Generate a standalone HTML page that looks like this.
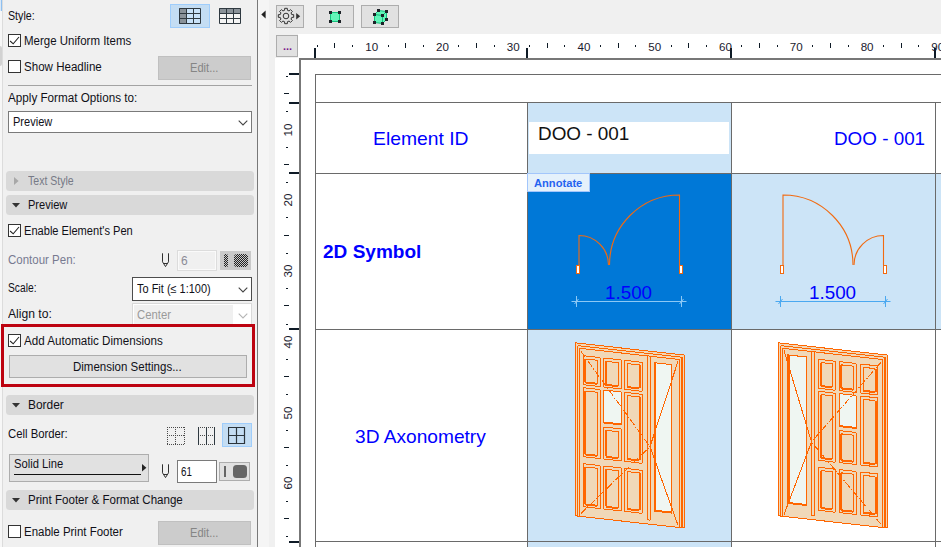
<!DOCTYPE html>
<html><head><meta charset="utf-8"><title>Schedule Format Options</title>
<style>
html,body{margin:0;padding:0}
body{width:941px;height:547px;overflow:hidden;position:relative;background:#f0f0f0;font-family:"Liberation Sans",sans-serif;font-size:12px}
div,span.t,span.rl{position:absolute}
#panel{left:0;top:0;width:257px;height:547px;background:#f0f0f0;overflow:hidden}
.t{white-space:nowrap;transform-origin:0 50%}
.cb{background:#fff;border:1px solid #333;box-sizing:border-box}
.btn{background:#e1e1e1;border:1px solid #adadad;box-sizing:border-box}
.btn.dis{background:#cccccc;border-color:#c0c0c0}
.bl{position:absolute;left:0;right:0;top:50%;margin-top:-8px;line-height:16px;text-align:center;color:#101018;white-space:nowrap}
.dd{background:#fff;border:1px solid #7a7a7a;box-sizing:border-box}
.hdr{background:#d9d9d9;border-radius:3.5px}
.rl{font-size:11.6px;line-height:16px;height:16px;text-align:center;color:#1a1a2e;white-space:nowrap}
.rv{transform:rotate(-90deg);transform-origin:50% 50%}
</style></head><body>
<div id="panel">
<div class="" style="left:0px;top:0px;width:3px;height:547px;background:#f7f7f7;border-right:1px solid #dcdcdc;box-sizing:border-box"></div>
<div class="" style="left:0px;top:0px;width:2px;height:11px;background:#d9e8f8;border-right:1px solid #8fc0f0;box-sizing:border-box"></div>
<div class="" style="left:0px;top:46px;width:2px;height:20px;background:#d2d2d2;border-radius:0 2px 2px 0"></div>
<span id="t_style" class="t" style="left:7.9px;top:8px;font-size:12px;line-height:16px;color:#101018;font-weight:normal;transform:scaleX(0.8899);">Style:</span>
<div class="" style="left:170px;top:4px;width:40px;height:24px;background:#c4ddf3;border:1px solid #9fcdfb;box-sizing:border-box"></div>
<svg style="position:absolute;left:179px;top:8px" width="22" height="16" viewBox="0 0 22 16"><rect x="0" y="0" width="22" height="16" fill="#c9e2f8"/><rect x="0" y="0" width="8" height="16" fill="#8a9299"/><path d="M0.5 0.5H21.5V15.5H0.5Z M7.5 0.5V15.5 M14.5 0.5V15.5 M0.5 5.5H21.5 M0.5 10.5H21.5" fill="none" stroke="#2f3940" stroke-width="1"/></svg>
<svg style="position:absolute;left:219px;top:8px" width="22" height="16" viewBox="0 0 22 16"><rect x="0" y="0" width="22" height="16" fill="#f4f4f4"/><rect x="0" y="0" width="22" height="6" fill="#8a9299"/><path d="M0.5 0.5H21.5V15.5H0.5Z M7.5 0.5V15.5 M14.5 0.5V15.5 M0.5 5.5H21.5 M0.5 10.5H21.5" fill="none" stroke="#2f3940" stroke-width="1"/></svg>
<div class="cb" style="left:8px;top:34px;width:13px;height:13px;"><svg width="13" height="13" viewBox="0 0 13 13" style="position:absolute;left:-1px;top:-1px"><path d="M2.1 7 L5.2 9.8 L11 3" fill="none" stroke="#222" stroke-width="1.1"/></svg></div>
<span id="t_merge" class="t" style="left:23.9px;top:33px;font-size:12px;line-height:16px;color:#101018;font-weight:normal;transform:scaleX(0.9575);">Merge Uniform Items</span>
<div class="cb" style="left:8px;top:60px;width:13px;height:13px;"></div>
<span id="t_showh" class="t" style="left:23.9px;top:59px;font-size:12px;line-height:16px;color:#101018;font-weight:normal;transform:scaleX(0.9635);">Show Headline</span>
<div class="btn dis" style="left:158px;top:56px;width:93px;height:24px;"></div>
<span id="t_edit1" class="t" style="left:190.4px;top:60px;font-size:12px;line-height:16px;color:#858585;font-weight:normal;transform:scaleX(0.9268);">Edit...</span>
<div class="" style="left:8px;top:85px;width:244px;height:1px;background:#a3a3a3"></div>
<span id="t_apply" class="t" style="left:7.9px;top:90px;font-size:12px;line-height:16px;color:#101018;font-weight:normal;transform:scaleX(0.9740);">Apply Format Options to:</span>
<div class="dd" style="left:8px;top:111px;width:244px;height:22px;"></div>
<span id="t_prev1" class="t" style="left:12.9px;top:114px;font-size:12px;line-height:16px;color:#101018;font-weight:normal;transform:scaleX(0.9191);">Preview</span>
<svg style="position:absolute;left:238px;top:120px" width="10" height="6" viewBox="0 0 10 6"><path d="M0.7 0.7 L5 5 L9.3 0.7" fill="none" stroke="#444" stroke-width="1.1"/></svg>
<div class="hdr" style="left:6px;top:171px;width:248px;height:20px;"></div><svg style="position:absolute;left:14px;top:177px" width="5" height="8" viewBox="0 0 5 8"><path d="M0 0V8L4.6 4Z" fill="#a8a8a8"/></svg><span id="t_h1" class="t" style="left:27.9px;top:173px;font-size:12px;line-height:16px;color:#777a86;font-weight:normal;transform:scaleX(0.8784);">Text Style</span>
<div class="hdr" style="left:6px;top:195px;width:248px;height:20px;"></div><svg style="position:absolute;left:12px;top:203px" width="8" height="5" viewBox="0 0 8 5"><path d="M0 0H8L4 4.6Z" fill="#333"/></svg><span id="t_h2" class="t" style="left:27.9px;top:197px;font-size:12px;line-height:16px;color:#101018;font-weight:normal;transform:scaleX(0.9191);">Preview</span>
<div class="cb" style="left:8px;top:224px;width:13px;height:13px;"><svg width="13" height="13" viewBox="0 0 13 13" style="position:absolute;left:-1px;top:-1px"><path d="M2.1 7 L5.2 9.8 L11 3" fill="none" stroke="#222" stroke-width="1.1"/></svg></div>
<span id="t_enpen" class="t" style="left:23.9px;top:223px;font-size:12px;line-height:16px;color:#101018;font-weight:normal;transform:scaleX(0.9238);">Enable Element&#39;s Pen</span>
<span id="t_cpen" class="t" style="left:7.9px;top:252px;font-size:12px;line-height:16px;color:#777a90;font-weight:normal;transform:scaleX(0.9583);">Contour Pen:</span>
<svg style="position:absolute;left:161px;top:253px" width="9" height="15" viewBox="0 0 9 15"><path d="M1.5 0.3V8.8L4.5 13.6L7.5 8.8V0.3 M2.6 10.5H6.4" fill="none" stroke="#303030" stroke-width="1"/></svg>
<div class="" style="left:177px;top:250px;width:40px;height:21px;border:1px solid #dcdcdc;box-sizing:border-box;background:#f0f0f0;box-shadow:inset 0 0 0 1px #fafafa"></div>
<span id="t_six" class="t" style="left:180.9px;top:253px;font-size:12px;line-height:16px;color:#8a8a96;font-weight:normal;transform:scaleX(1.0000);">6</span>
<div class="" style="left:220px;top:251px;width:31px;height:19px;background:#c9c9c9"></div>
<svg style="position:absolute;left:220px;top:251px" width="31" height="19" viewBox="0 0 31 19"><defs><pattern id="dz" width="2" height="2" patternUnits="userSpaceOnUse"><rect x="0" y="0" width="1" height="1" fill="#222"/><rect x="1" y="1" width="1" height="1" fill="#222"/></pattern></defs><rect x="4" y="3" width="4" height="13" rx="1.5" fill="url(#dz)"/><rect x="14" y="3" width="14" height="13" rx="3" fill="url(#dz)"/></svg>
<span id="t_scale" class="t" style="left:7.9px;top:280px;font-size:12px;line-height:16px;color:#101018;font-weight:normal;transform:scaleX(0.8538);">Scale:</span>
<div class="dd" style="left:132px;top:277px;width:120px;height:24px;border-color:#4d4d4d"></div>
<span id="t_tofit" class="t" style="left:136.9px;top:281px;font-size:12px;line-height:16px;color:#101018;font-weight:normal;transform:scaleX(0.9145);">To Fit (&le; 1:100)</span>
<svg style="position:absolute;left:238px;top:287px" width="10" height="6" viewBox="0 0 10 6"><path d="M0.7 0.7 L5 5 L9.3 0.7" fill="none" stroke="#444" stroke-width="1.1"/></svg>
<span id="t_align" class="t" style="left:7.9px;top:306px;font-size:12px;line-height:16px;color:#101018;font-weight:normal;transform:scaleX(1.0104);">Align to:</span>
<div class="" style="left:132px;top:303px;width:120px;height:23px;border:1px solid #d9d9d9;box-sizing:border-box;background:#fff"></div>
<div class="" style="left:134px;top:305px;width:99px;height:21px;background:#f0f0f0"></div>
<span id="t_center" class="t" style="left:136.9px;top:307px;font-size:12px;line-height:16px;color:#9a9a9a;font-weight:normal;transform:scaleX(0.9423);">Center</span>
<svg style="position:absolute;left:238px;top:313px" width="10" height="6" viewBox="0 0 10 6"><path d="M0.7 0.7 L5 5 L9.3 0.7" fill="none" stroke="#b5b5b5" stroke-width="1.1"/></svg>
<div class="" style="left:1px;top:324px;width:254px;height:63px;border:3px solid #bd0310;box-sizing:border-box;background:#f0f0f0"></div>
<div class="cb" style="left:8px;top:334px;width:13px;height:13px;"><svg width="13" height="13" viewBox="0 0 13 13" style="position:absolute;left:-1px;top:-1px"><path d="M2.1 7 L5.2 9.8 L11 3" fill="none" stroke="#222" stroke-width="1.1"/></svg></div>
<span id="t_addauto" class="t" style="left:23.9px;top:333px;font-size:12px;line-height:16px;color:#101018;font-weight:normal;transform:scaleX(0.9677);">Add Automatic Dimensions</span>
<div class="btn" style="left:9px;top:355px;width:238px;height:23px;"></div>
<span id="t_dimset" class="t" style="left:73.0px;top:359px;font-size:12px;line-height:16px;color:#101018;font-weight:normal;transform:scaleX(0.9592);">Dimension Settings...</span>
<div class="hdr" style="left:6px;top:395px;width:248px;height:20px;"></div><svg style="position:absolute;left:12px;top:403px" width="8" height="5" viewBox="0 0 8 5"><path d="M0 0H8L4 4.6Z" fill="#333"/></svg><span id="t_h3" class="t" style="left:27.9px;top:397px;font-size:12px;line-height:16px;color:#101018;font-weight:normal;transform:scaleX(0.9934);">Border</span>
<span id="t_cellb" class="t" style="left:7.9px;top:426px;font-size:12px;line-height:16px;color:#101018;font-weight:normal;transform:scaleX(0.9431);">Cell Border:</span>
<div class="" style="left:222px;top:423px;width:30px;height:24px;background:#c4ddf3;border:1px solid #9fcdfb;box-sizing:border-box"></div>
<svg style="position:absolute;left:167px;top:427px" width="18" height="18" viewBox="0 0 18 18" shape-rendering="crispEdges"><path d="M0 0.5H18 M0 8.5H18 M0 17.5H18 M0.5 0V18 M8.5 0V18 M17.5 0V18" fill="none" stroke="#4a4a4a" stroke-width="1" stroke-dasharray="1 1"/></svg>
<svg style="position:absolute;left:198px;top:427px" width="18" height="18" viewBox="0 0 18 18" shape-rendering="crispEdges"><path d="M0 0.5H17 M0 17.5H17 M0 8.5H17" fill="none" stroke="#4a4a4a" stroke-width="1" stroke-dasharray="1 1"/><path d="M0.5 0V18 M8.5 0V18 M16.5 0V18" fill="none" stroke="#2f3940" stroke-width="1"/></svg>
<svg style="position:absolute;left:228px;top:427px" width="18" height="18" viewBox="0 0 18 18"><path d="M0.5 0.5H16.5V16.5H0.5Z M8.5 0.5V16.5 M0.5 8.5H16.5" fill="none" stroke="#2b343b" stroke-width="1.2"/></svg>
<div class="btn" style="left:9px;top:454px;width:140px;height:28px;"></div>
<span id="t_solid" class="t" style="left:13.9px;top:456px;font-size:12px;line-height:16px;color:#101018;font-weight:normal;transform:scaleX(0.9342);">Solid Line</span>
<div class="" style="left:14px;top:474px;width:127px;height:1px;background:#111"></div>
<svg style="position:absolute;left:142px;top:464px" width="5" height="8" viewBox="0 0 5 8"><path d="M0 0V7.4L4.4 3.7Z" fill="#222"/></svg>
<svg style="position:absolute;left:161px;top:464px" width="9" height="15" viewBox="0 0 9 15"><path d="M1.5 0.3V8.8L4.5 13.6L7.5 8.8V0.3 M2.6 10.5H6.4" fill="none" stroke="#303030" stroke-width="1"/></svg>
<div class="dd" style="left:177px;top:460px;width:40px;height:23px;"></div>
<span id="t_61" class="t" style="left:181.4px;top:464px;font-size:12px;line-height:16px;color:#101018;font-weight:normal;transform:scaleX(0.8121);">61</span>
<div class="btn" style="left:219px;top:462px;width:31px;height:19px;"></div>
<div class="" style="left:224px;top:466px;width:2px;height:11px;background:#666"></div>
<div class="" style="left:233px;top:465px;width:14px;height:13px;background:#666;border-radius:3.5px"></div>
<div class="hdr" style="left:6px;top:490px;width:248px;height:20px;"></div><svg style="position:absolute;left:12px;top:498px" width="8" height="5" viewBox="0 0 8 5"><path d="M0 0H8L4 4.6Z" fill="#333"/></svg><span id="t_h4" class="t" style="left:27.9px;top:492px;font-size:12px;line-height:16px;color:#101018;font-weight:normal;transform:scaleX(0.9629);">Print Footer &amp; Format Change</span>
<div class="cb" style="left:8px;top:525px;width:13px;height:13px;"></div>
<span id="t_enfoot" class="t" style="left:23.9px;top:524px;font-size:12px;line-height:16px;color:#101018;font-weight:normal;transform:scaleX(0.9553);">Enable Print Footer</span>
<div class="btn dis" style="left:158px;top:521px;width:93px;height:24px;"></div>
<span id="t_edit2" class="t" style="left:190.4px;top:525px;font-size:12px;line-height:16px;color:#858585;font-weight:normal;transform:scaleX(0.9268);">Edit...</span>
</div>
<div class="" style="left:257px;top:0px;width:1px;height:547px;background:#787878"></div>
<div class="" style="left:258px;top:0px;width:11px;height:547px;background:#f5f5f5"></div>
<svg style="position:absolute;left:261px;top:10px" width="5" height="9" viewBox="0 0 5 9"><path d="M4.6 0.4V8.4L0.3 4.4Z" fill="#222"/></svg>
<div class="btn" style="left:276px;top:5px;width:28px;height:23px;"></div>
<svg style="position:absolute;left:276px;top:5px" width="28" height="23" viewBox="0 0 28 23"><path d="M17.68 9.66 L17.68 12.34 L15.74 12.38 L15.03 14.08 L16.38 15.49 L14.49 17.38 L13.08 16.03 L11.38 16.74 L11.34 18.68 L8.66 18.68 L8.62 16.74 L6.92 16.03 L5.51 17.38 L3.62 15.49 L4.97 14.08 L4.26 12.38 L2.32 12.34 L2.32 9.66 L4.26 9.62 L4.97 7.92 L3.62 6.51 L5.51 4.62 L6.92 5.97 L8.62 5.26 L8.66 3.32 L11.34 3.32 L11.38 5.26 L13.08 5.97 L14.49 4.62 L16.38 6.51 L15.03 7.92 L15.74 9.62Z" fill="none" stroke="#333" stroke-width="1" stroke-linejoin="round"/><circle cx="10" cy="11" r="2.8" fill="none" stroke="#333" stroke-width="1"/><path d="M20.2 8V14.6L24.2 11.3Z" fill="#333"/></svg>
<div class="btn" style="left:316px;top:5px;width:38px;height:23px;"></div>
<svg style="position:absolute;left:316px;top:5px" width="38" height="23" viewBox="0 0 38 23"><rect x="14.5" y="7.5" width="9" height="9" fill="#62f4b8" stroke="#12c07c" stroke-width="1"/><g fill="#1d2228" shape-rendering="crispEdges"><rect x="13" y="6" width="3" height="3"/><rect x="22" y="6" width="3" height="3"/><rect x="13" y="15" width="3" height="3"/><rect x="22" y="15" width="3" height="3"/></g></svg>
<div class="btn" style="left:361px;top:5px;width:38px;height:23px;"></div>
<svg style="position:absolute;left:361px;top:5px" width="38" height="23" viewBox="0 0 38 23"><path d="M13.5 9.5L17.5 5.5L25.5 6.5V14.5L21.5 18.5L13.5 17.5Z" fill="#62f4b8" stroke="#12c07c" stroke-width="1" stroke-linejoin="round"/><path d="M13.5 9.5L21.5 10.5V18.5 M21.5 10.5L25.5 6.5" fill="none" stroke="#12c07c" stroke-width="1"/><g fill="#1d2228" shape-rendering="crispEdges"><rect x="12" y="8" width="3" height="3"/><rect x="20" y="9" width="3" height="3"/><rect x="12" y="16" width="3" height="3"/><rect x="20" y="17" width="3" height="3"/><rect x="16" y="4" width="3" height="3"/><rect x="24" y="5" width="3" height="3"/><rect x="24" y="13" width="3" height="3"/></g></svg>
<div class="" style="left:298px;top:34px;width:643px;height:25px;background:#fff"></div>
<div class="" style="left:275px;top:58px;width:25px;height:489px;background:#fff"></div>
<div class="btn" style="left:276px;top:35px;width:22px;height:22px;"></div>
<span id="t_dots" class="t" style="left:283px;top:39px;font-size:11px;line-height:15px;color:#7a1a8a;font-weight:bold;transform:scaleX(1.0000);">...</span>
<svg style="position:absolute;left:0;top:0" width="941" height="547" viewBox="0 0 941 547" shape-rendering="crispEdges"><rect x="317" y="45" width="1" height="2" fill="#0e1a26"/><rect x="334" y="43" width="1" height="5" fill="#0e1a26"/><rect x="352" y="45" width="1" height="2" fill="#0e1a26"/><rect x="388" y="45" width="1" height="2" fill="#0e1a26"/><rect x="405" y="43" width="1" height="5" fill="#0e1a26"/><rect x="423" y="45" width="1" height="2" fill="#0e1a26"/><rect x="458" y="45" width="1" height="2" fill="#0e1a26"/><rect x="476" y="43" width="1" height="5" fill="#0e1a26"/><rect x="494" y="45" width="1" height="2" fill="#0e1a26"/><rect x="529" y="45" width="1" height="2" fill="#0e1a26"/><rect x="547" y="43" width="1" height="5" fill="#0e1a26"/><rect x="564" y="45" width="1" height="2" fill="#0e1a26"/><rect x="600" y="45" width="1" height="2" fill="#0e1a26"/><rect x="618" y="43" width="1" height="5" fill="#0e1a26"/><rect x="635" y="45" width="1" height="2" fill="#0e1a26"/><rect x="671" y="45" width="1" height="2" fill="#0e1a26"/><rect x="688" y="43" width="1" height="5" fill="#0e1a26"/><rect x="706" y="45" width="1" height="2" fill="#0e1a26"/><rect x="741" y="45" width="1" height="2" fill="#0e1a26"/><rect x="759" y="43" width="1" height="5" fill="#0e1a26"/><rect x="777" y="45" width="1" height="2" fill="#0e1a26"/><rect x="812" y="45" width="1" height="2" fill="#0e1a26"/><rect x="830" y="43" width="1" height="5" fill="#0e1a26"/><rect x="848" y="45" width="1" height="2" fill="#0e1a26"/><rect x="883" y="45" width="1" height="2" fill="#0e1a26"/><rect x="901" y="43" width="1" height="5" fill="#0e1a26"/><rect x="918" y="45" width="1" height="2" fill="#0e1a26"/><rect x="314" y="48" width="2" height="10" fill="#0e1a26"/><rect x="526" y="48" width="2" height="10" fill="#0e1a26"/><rect x="730" y="48" width="2" height="10" fill="#0e1a26"/><rect x="934" y="48" width="2" height="10" fill="#0e1a26"/><rect x="286" y="76" width="2" height="1" fill="#0e1a26"/><rect x="284" y="93" width="5" height="1" fill="#0e1a26"/><rect x="286" y="111" width="2" height="1" fill="#0e1a26"/><rect x="286" y="147" width="2" height="1" fill="#0e1a26"/><rect x="284" y="164" width="5" height="1" fill="#0e1a26"/><rect x="286" y="182" width="2" height="1" fill="#0e1a26"/><rect x="286" y="217" width="2" height="1" fill="#0e1a26"/><rect x="284" y="235" width="5" height="1" fill="#0e1a26"/><rect x="286" y="253" width="2" height="1" fill="#0e1a26"/><rect x="286" y="288" width="2" height="1" fill="#0e1a26"/><rect x="284" y="305" width="5" height="1" fill="#0e1a26"/><rect x="286" y="324" width="2" height="1" fill="#0e1a26"/><rect x="286" y="359" width="2" height="1" fill="#0e1a26"/><rect x="284" y="376" width="5" height="1" fill="#0e1a26"/><rect x="286" y="394" width="2" height="1" fill="#0e1a26"/><rect x="286" y="430" width="2" height="1" fill="#0e1a26"/><rect x="284" y="447" width="5" height="1" fill="#0e1a26"/><rect x="286" y="465" width="2" height="1" fill="#0e1a26"/><rect x="286" y="501" width="2" height="1" fill="#0e1a26"/><rect x="284" y="518" width="5" height="1" fill="#0e1a26"/><rect x="286" y="536" width="2" height="1" fill="#0e1a26"/><rect x="289" y="73" width="10" height="2" fill="#0e1a26"/><rect x="289" y="102" width="10" height="2" fill="#0e1a26"/><rect x="289" y="172" width="10" height="2" fill="#0e1a26"/><rect x="289" y="328" width="10" height="2" fill="#0e1a26"/><rect x="289" y="541" width="10" height="2" fill="#0e1a26"/></svg>
<span class="rl" style="left:361.7px;top:39px;width:20px">10</span>
<span class="rl" style="left:432.4px;top:39px;width:20px">20</span>
<span class="rl" style="left:503.2px;top:39px;width:20px">30</span>
<span class="rl" style="left:574.0px;top:39px;width:20px">40</span>
<span class="rl" style="left:644.8px;top:39px;width:20px">50</span>
<span class="rl" style="left:715.5px;top:39px;width:20px">60</span>
<span class="rl" style="left:786.3px;top:39px;width:20px">70</span>
<span class="rl" style="left:857.1px;top:39px;width:20px">80</span>
<span class="rl" style="left:927.8px;top:39px;width:20px">90</span>
<span class="rl rv" style="left:278px;top:121.5px;width:20px">10</span>
<span class="rl rv" style="left:278px;top:192.2px;width:20px">20</span>
<span class="rl rv" style="left:278px;top:263.0px;width:20px">30</span>
<span class="rl rv" style="left:278px;top:333.8px;width:20px">40</span>
<span class="rl rv" style="left:278px;top:404.6px;width:20px">50</span>
<span class="rl rv" style="left:278px;top:475.3px;width:20px">60</span>
<div class="" style="left:299px;top:58px;width:642px;height:489px;background:#fff;border-left:2px solid #777;border-top:2px solid #777;box-sizing:border-box"></div>
<div class="" style="left:528px;top:103px;width:203px;height:444px;background:#cce4f7"></div>
<div class="" style="left:732px;top:174px;width:209px;height:155px;background:#cce4f7"></div>
<div class="" style="left:528px;top:174px;width:203px;height:155px;background:#0078d7"></div>
<div class="" style="left:529px;top:122px;width:200px;height:32px;background:#fff"></div>
<div class="" style="left:315px;top:74px;width:626px;height:1px;background:#6a6a6a"></div>
<div class="" style="left:315px;top:102px;width:626px;height:1px;background:#6a6a6a"></div>
<div class="" style="left:315px;top:173px;width:626px;height:1px;background:#6a6a6a"></div>
<div class="" style="left:315px;top:329px;width:626px;height:1px;background:#6a6a6a"></div>
<div class="" style="left:315px;top:541px;width:626px;height:1px;background:#6a6a6a"></div>
<div class="" style="left:315px;top:74px;width:1px;height:473px;background:#6a6a6a"></div>
<div class="" style="left:527px;top:74px;width:1px;height:473px;background:#6a6a6a"></div>
<div class="" style="left:731px;top:74px;width:1px;height:473px;background:#6a6a6a"></div>
<div class="" style="left:935px;top:74px;width:1px;height:473px;background:#6a6a6a"></div>
<div class="" style="left:316px;top:75px;width:625px;height:27px;background:#fff"></div>
<span id="c_elid" class="t" style="left:373.2px;top:126px;font-size:19px;line-height:25px;color:#0000ff;font-weight:normal;transform:scaleX(1.0163);">Element ID</span>
<span id="c_doo1" class="t" style="left:538px;top:121px;font-size:19px;line-height:25px;color:#111;font-weight:normal;transform:scaleX(0.9948);">DOO - 001</span>
<span id="c_doo2" class="t" style="left:834.2px;top:126px;font-size:19px;line-height:25px;color:#0000ff;font-weight:normal;transform:scaleX(0.9915);">DOO - 001</span>
<span id="c_2d" class="t" style="left:323px;top:239px;font-size:19px;line-height:25px;color:#0000ff;font-weight:bold;transform:scaleX(1.0020);">2D Symbol</span>
<span id="c_3d" class="t" style="left:355.2px;top:424px;font-size:19px;line-height:25px;color:#0000ff;font-weight:normal;transform:scaleX(1.0069);">3D Axonometry</span>
<div class="" style="left:527px;top:173px;width:63px;height:19px;background:#e5f1fb;border:1px solid #a3c6fb;box-sizing:border-box"></div><span id="t_annot" class="t" style="left:534.2px;top:176px;font-size:11px;line-height:15px;color:#2563f0;font-weight:bold;transform:scaleX(1.0134);">Annotate</span>
<svg style="position:absolute;left:0;top:0" width="941" height="547" viewBox="0 0 941 547">
<path d="M579.0 265V235.5 A29.5 29.5 0 0 1 608.5 265" fill="none" stroke="#f26a10" stroke-width="1.1"/><path d="M679.5 265V195 A70 70 0 0 0 609.5 265" fill="none" stroke="#f26a10" stroke-width="1.1"/><rect x="576.5" y="265.5" width="3" height="8" fill="#fff" stroke="#f26a10" stroke-width="1"/><rect x="679.5" y="265.5" width="3" height="8" fill="#fff" stroke="#f26a10" stroke-width="1"/><path d="M571.5 301.5H686.5 M576.5 296V307 M681.5 296V307 M574.5 304L578.5 299 M679.5 304L683.5 299" fill="none" stroke="#8cc8f5" stroke-width="1"/>
<path d="M783.0 265V195 A70 70 0 0 1 853.0 265" fill="none" stroke="#f26a10" stroke-width="1.1"/><path d="M883.5 265V235.5 A29.5 29.5 0 0 0 854.0 265" fill="none" stroke="#f26a10" stroke-width="1.1"/><rect x="780.5" y="265.5" width="3" height="8" fill="#fff" stroke="#f26a10" stroke-width="1"/><rect x="883.5" y="265.5" width="3" height="8" fill="#fff" stroke="#f26a10" stroke-width="1"/><path d="M775.5 301.5H890.5 M780.5 296V307 M885.5 296V307 M778.5 304L782.5 299 M883.5 304L887.5 299" fill="none" stroke="#4aa8f0" stroke-width="1"/>
<g shape-rendering="crispEdges">
<path d="M575.0 342.8L684.0 355.0L684.0 528.0L575.0 515.8Z" fill="#f0d8b8" stroke="#ff6600" stroke-width="1" stroke-linejoin="round"/><path d="M577.5 345.6L577.5 515.6" stroke="#ff6600" stroke-width="1" fill="none"/><path d="M579.5 348.3L579.5 515.8" stroke="#ff6600" stroke-width="1" fill="none"/><path d="M577.5 345.6L681.5 357.2" stroke="#ff6600" stroke-width="1" fill="none"/><path d="M579.5 348.3L679.5 359.5" stroke="#ff6600" stroke-width="1" fill="none"/><path d="M681.5 357.2L681.5 527.2" stroke="#ff6600" stroke-width="2" fill="none"/><path d="M679.0 359.4L679.0 526.9" stroke="#ff6600" stroke-width="1" fill="none"/><path d="M647.0 355.8L650.0 356.2L650.0 520.2L647.0 519.8Z" fill="#f0d8b8" stroke="#ff6600" stroke-width="1.0" stroke-linejoin="round"/><path d="M654.5 362.7L671.5 364.6L671.5 513.1L654.5 511.2Z" fill="#eff6f2" stroke="#ff6600" stroke-width="1" stroke-linejoin="round"/><path d="M655.0 362.7L655.0 511.2" stroke="#ff6600" stroke-width="2" fill="none"/><path d="M654.5 510.7L671.5 512.6" stroke="#ff6600" stroke-width="2" fill="none"/><path d="M583.0 355.7L600.0 357.6L600.0 386.6L583.0 384.7Z" fill="none" stroke="#ff6600" stroke-width="1" stroke-linejoin="round"/><path d="M585.5 359.0L597.5 360.3L597.5 383.3L585.5 382.0Z" fill="#f0d8b8" stroke="#ff6600" stroke-width="1" stroke-linejoin="round"/><path d="M585.0 358.9L585.0 381.9" stroke="#ff6600" stroke-width="2" fill="none"/><path d="M585.5 382.5L597.5 383.8" stroke="#ff6600" stroke-width="2" fill="none"/><path d="M583.0 463.7L600.0 465.6L600.0 508.6L583.0 506.7Z" fill="none" stroke="#ff6600" stroke-width="1" stroke-linejoin="round"/><path d="M585.5 467.0L597.5 468.3L597.5 505.3L585.5 504.0Z" fill="#f0d8b8" stroke="#ff6600" stroke-width="1" stroke-linejoin="round"/><path d="M585.0 466.9L585.0 503.9" stroke="#ff6600" stroke-width="2" fill="none"/><path d="M585.5 504.5L597.5 505.8" stroke="#ff6600" stroke-width="2" fill="none"/><path d="M603.5 358.0L621.0 359.9L621.0 388.9L603.5 387.0Z" fill="none" stroke="#ff6600" stroke-width="1" stroke-linejoin="round"/><path d="M606.0 361.3L618.5 362.7L618.5 385.7L606.0 384.3Z" fill="#f0d8b8" stroke="#ff6600" stroke-width="1" stroke-linejoin="round"/><path d="M605.5 361.2L605.5 384.2" stroke="#ff6600" stroke-width="2" fill="none"/><path d="M606.0 384.8L618.5 386.2" stroke="#ff6600" stroke-width="2" fill="none"/><path d="M603.5 466.0L621.0 467.9L621.0 510.9L603.5 509.0Z" fill="none" stroke="#ff6600" stroke-width="1" stroke-linejoin="round"/><path d="M606.0 469.3L618.5 470.7L618.5 507.7L606.0 506.3Z" fill="#f0d8b8" stroke="#ff6600" stroke-width="1" stroke-linejoin="round"/><path d="M605.5 469.2L605.5 506.2" stroke="#ff6600" stroke-width="2" fill="none"/><path d="M606.0 506.8L618.5 508.2" stroke="#ff6600" stroke-width="2" fill="none"/><path d="M624.5 360.3L642.0 362.3L642.0 391.3L624.5 389.3Z" fill="none" stroke="#ff6600" stroke-width="1" stroke-linejoin="round"/><path d="M627.0 363.6L639.5 365.0L639.5 388.0L627.0 386.6Z" fill="#f0d8b8" stroke="#ff6600" stroke-width="1" stroke-linejoin="round"/><path d="M640.0 365.0L640.0 388.0" stroke="#ff6600" stroke-width="2" fill="none"/><path d="M627.0 387.1L639.5 388.5" stroke="#ff6600" stroke-width="2" fill="none"/><path d="M624.5 468.3L642.0 470.3L642.0 513.3L624.5 511.3Z" fill="none" stroke="#ff6600" stroke-width="1" stroke-linejoin="round"/><path d="M627.0 471.6L639.5 473.0L639.5 510.0L627.0 508.6Z" fill="#f0d8b8" stroke="#ff6600" stroke-width="1" stroke-linejoin="round"/><path d="M640.0 473.0L640.0 510.0" stroke="#ff6600" stroke-width="2" fill="none"/><path d="M627.0 509.1L639.5 510.5" stroke="#ff6600" stroke-width="2" fill="none"/><path d="M583.0 387.7L600.0 389.6L600.0 458.6L583.0 456.7Z" fill="none" stroke="#ff6600" stroke-width="1" stroke-linejoin="round"/><path d="M585.5 391.0L597.5 392.3L597.5 455.3L585.5 454.0Z" fill="#f0d8b8" stroke="#ff6600" stroke-width="1" stroke-linejoin="round"/><path d="M585.0 390.9L585.0 453.9" stroke="#ff6600" stroke-width="2" fill="none"/><path d="M585.5 454.5L597.5 455.8" stroke="#ff6600" stroke-width="2" fill="none"/><path d="M624.5 392.3L642.0 394.3L642.0 463.3L624.5 461.3Z" fill="none" stroke="#ff6600" stroke-width="1" stroke-linejoin="round"/><path d="M627.0 395.6L639.5 397.0L639.5 460.0L627.0 458.6Z" fill="#f0d8b8" stroke="#ff6600" stroke-width="1" stroke-linejoin="round"/><path d="M640.0 397.0L640.0 460.0" stroke="#ff6600" stroke-width="2" fill="none"/><path d="M627.0 459.1L639.5 460.5" stroke="#ff6600" stroke-width="2" fill="none"/><path d="M603.5 390.0L621.0 391.9L621.0 424.9L603.5 423.0Z" fill="#eff6f2" stroke="#ff6600" stroke-width="1" stroke-linejoin="round"/><path d="M603.5 422.5L621.0 424.4" stroke="#ff6600" stroke-width="2" fill="none"/><path d="M603.5 427.0L621.0 428.9L621.0 460.9L603.5 459.0Z" fill="none" stroke="#ff6600" stroke-width="1" stroke-linejoin="round"/><path d="M606.0 430.3L618.5 431.7L618.5 457.7L606.0 456.3Z" fill="#f0d8b8" stroke="#ff6600" stroke-width="1" stroke-linejoin="round"/><path d="M605.5 430.2L605.5 456.2" stroke="#ff6600" stroke-width="2" fill="none"/><path d="M606.0 456.8L618.5 458.2" stroke="#ff6600" stroke-width="2" fill="none"/><path d="M581.0 351.5L650.0 446.7" stroke="#ff6600" stroke-width="1" fill="none" stroke-dasharray="7 2 1 2"/><path d="M581.0 513.5L650.0 446.7" stroke="#ff6600" stroke-width="1" fill="none" stroke-dasharray="7 2 1 2"/><path d="M678.0 361.3L650.0 446.7" stroke="#ff6600" stroke-width="1" fill="none"/><path d="M678.0 525.3L650.0 446.7" stroke="#ff6600" stroke-width="1" fill="none"/>
<path d="M778.0 342.8L887.0 355.0L887.0 528.0L778.0 515.8Z" fill="#f0d8b8" stroke="#ff6600" stroke-width="1" stroke-linejoin="round"/><path d="M780.5 345.6L780.5 515.6" stroke="#ff6600" stroke-width="1" fill="none"/><path d="M782.5 348.3L782.5 515.8" stroke="#ff6600" stroke-width="1" fill="none"/><path d="M780.5 345.6L884.5 357.2" stroke="#ff6600" stroke-width="1" fill="none"/><path d="M782.5 348.3L882.5 359.5" stroke="#ff6600" stroke-width="1" fill="none"/><path d="M884.5 357.2L884.5 527.2" stroke="#ff6600" stroke-width="2" fill="none"/><path d="M882.0 359.4L882.0 526.9" stroke="#ff6600" stroke-width="1" fill="none"/><path d="M811.5 351.5L814.5 351.9L814.5 515.9L811.5 515.5Z" fill="#f0d8b8" stroke="#ff6600" stroke-width="1.0" stroke-linejoin="round"/><path d="M787.5 354.9L806.5 357.0L806.5 505.5L787.5 503.4Z" fill="#eff6f2" stroke="#ff6600" stroke-width="1" stroke-linejoin="round"/><path d="M788.0 354.9L788.0 503.4" stroke="#ff6600" stroke-width="3" fill="none"/><path d="M787.5 502.9L806.5 505.0" stroke="#ff6600" stroke-width="2" fill="none"/><path d="M818.5 359.3L835.0 361.2L835.0 390.2L818.5 388.3Z" fill="none" stroke="#ff6600" stroke-width="1" stroke-linejoin="round"/><path d="M821.0 362.6L832.5 363.9L832.5 386.9L821.0 385.6Z" fill="#f0d8b8" stroke="#ff6600" stroke-width="1" stroke-linejoin="round"/><path d="M820.5 362.5L820.5 385.5" stroke="#ff6600" stroke-width="2" fill="none"/><path d="M821.0 386.1L832.5 387.4" stroke="#ff6600" stroke-width="2" fill="none"/><path d="M818.5 467.3L835.0 469.2L835.0 512.2L818.5 510.3Z" fill="none" stroke="#ff6600" stroke-width="1" stroke-linejoin="round"/><path d="M821.0 470.6L832.5 471.9L832.5 508.9L821.0 507.6Z" fill="#f0d8b8" stroke="#ff6600" stroke-width="1" stroke-linejoin="round"/><path d="M820.5 470.5L820.5 507.5" stroke="#ff6600" stroke-width="2" fill="none"/><path d="M821.0 508.1L832.5 509.4" stroke="#ff6600" stroke-width="2" fill="none"/><path d="M839.0 361.6L856.0 363.5L856.0 392.5L839.0 390.6Z" fill="none" stroke="#ff6600" stroke-width="1" stroke-linejoin="round"/><path d="M841.5 364.9L853.5 366.2L853.5 389.2L841.5 387.9Z" fill="#f0d8b8" stroke="#ff6600" stroke-width="1" stroke-linejoin="round"/><path d="M841.0 364.8L841.0 387.8" stroke="#ff6600" stroke-width="2" fill="none"/><path d="M841.5 388.4L853.5 389.7" stroke="#ff6600" stroke-width="2" fill="none"/><path d="M839.0 469.6L856.0 471.5L856.0 514.5L839.0 512.6Z" fill="none" stroke="#ff6600" stroke-width="1" stroke-linejoin="round"/><path d="M841.5 472.9L853.5 474.2L853.5 511.2L841.5 509.9Z" fill="#f0d8b8" stroke="#ff6600" stroke-width="1" stroke-linejoin="round"/><path d="M841.0 472.8L841.0 509.8" stroke="#ff6600" stroke-width="2" fill="none"/><path d="M841.5 510.4L853.5 511.7" stroke="#ff6600" stroke-width="2" fill="none"/><path d="M860.5 364.0L877.5 365.9L877.5 394.9L860.5 393.0Z" fill="none" stroke="#ff6600" stroke-width="1" stroke-linejoin="round"/><path d="M863.0 367.3L875.0 368.6L875.0 391.6L863.0 390.3Z" fill="#f0d8b8" stroke="#ff6600" stroke-width="1" stroke-linejoin="round"/><path d="M875.5 368.7L875.5 391.7" stroke="#ff6600" stroke-width="2" fill="none"/><path d="M863.0 390.8L875.0 392.1" stroke="#ff6600" stroke-width="2" fill="none"/><path d="M860.5 472.0L877.5 473.9L877.5 516.9L860.5 515.0Z" fill="none" stroke="#ff6600" stroke-width="1" stroke-linejoin="round"/><path d="M863.0 475.3L875.0 476.6L875.0 513.6L863.0 512.3Z" fill="#f0d8b8" stroke="#ff6600" stroke-width="1" stroke-linejoin="round"/><path d="M875.5 476.7L875.5 513.7" stroke="#ff6600" stroke-width="2" fill="none"/><path d="M863.0 512.8L875.0 514.1" stroke="#ff6600" stroke-width="2" fill="none"/><path d="M818.5 391.3L835.0 393.2L835.0 462.2L818.5 460.3Z" fill="none" stroke="#ff6600" stroke-width="1" stroke-linejoin="round"/><path d="M821.0 394.6L832.5 395.9L832.5 458.9L821.0 457.6Z" fill="#f0d8b8" stroke="#ff6600" stroke-width="1" stroke-linejoin="round"/><path d="M820.5 394.5L820.5 457.5" stroke="#ff6600" stroke-width="2" fill="none"/><path d="M821.0 458.1L832.5 459.4" stroke="#ff6600" stroke-width="2" fill="none"/><path d="M860.5 396.0L877.5 397.9L877.5 466.9L860.5 465.0Z" fill="none" stroke="#ff6600" stroke-width="1" stroke-linejoin="round"/><path d="M863.0 399.3L875.0 400.6L875.0 463.6L863.0 462.3Z" fill="#f0d8b8" stroke="#ff6600" stroke-width="1" stroke-linejoin="round"/><path d="M875.5 400.7L875.5 463.7" stroke="#ff6600" stroke-width="2" fill="none"/><path d="M863.0 462.8L875.0 464.1" stroke="#ff6600" stroke-width="2" fill="none"/><path d="M839.0 393.6L856.0 395.5L856.0 428.5L839.0 426.6Z" fill="#eff6f2" stroke="#ff6600" stroke-width="1" stroke-linejoin="round"/><path d="M839.0 426.1L856.0 428.0" stroke="#ff6600" stroke-width="2" fill="none"/><path d="M839.0 430.6L856.0 432.5L856.0 464.5L839.0 462.6Z" fill="none" stroke="#ff6600" stroke-width="1" stroke-linejoin="round"/><path d="M841.5 433.9L853.5 435.2L853.5 461.2L841.5 459.9Z" fill="#f0d8b8" stroke="#ff6600" stroke-width="1" stroke-linejoin="round"/><path d="M841.0 433.8L841.0 459.8" stroke="#ff6600" stroke-width="2" fill="none"/><path d="M841.5 460.4L853.5 461.7" stroke="#ff6600" stroke-width="2" fill="none"/><path d="M881.0 362.3L811.5 442.0" stroke="#ff6600" stroke-width="1" fill="none" stroke-dasharray="7 2 1 2"/><path d="M881.0 524.3L811.5 442.0" stroke="#ff6600" stroke-width="1" fill="none" stroke-dasharray="7 2 1 2"/><path d="M784.0 350.5L811.5 442.0" stroke="#ff6600" stroke-width="1" fill="none"/><path d="M784.0 514.5L811.5 442.0" stroke="#ff6600" stroke-width="1" fill="none"/>
</g>
</svg>
<span id="c_dim1" class="t" style="left:605.3px;top:279.5px;font-size:19px;line-height:25px;color:#0000ff;font-weight:normal;transform:scaleX(0.9904);">1.500</span>
<span id="c_dim2" class="t" style="left:809.3px;top:279.5px;font-size:19px;line-height:25px;color:#0000ff;font-weight:normal;transform:scaleX(0.9904);">1.500</span>
</body></html>
